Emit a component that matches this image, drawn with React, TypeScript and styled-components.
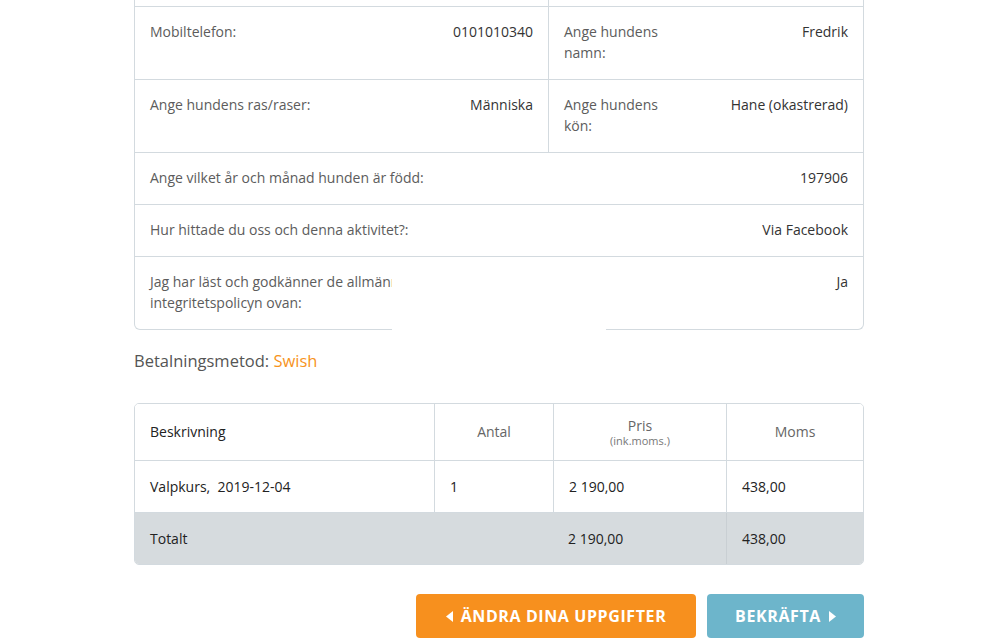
import React from "react";
import styled, { createGlobalStyle } from "styled-components";

const Global = createGlobalStyle`
  html, body { margin: 0; padding: 0; background: #fff; }
  body { font-family: "Open Sans", "Liberation Sans", sans-serif; color: #333; }
  * { box-sizing: border-box; }
`;

const BORDER = "#d3dadf";

const Page = styled.div`
  width: 730px;
  margin-left: calc(50% - 365.5px);
  padding-bottom: 20px;
`;

const Card = styled.div`
  position: relative;
  border: 1px solid ${BORDER};
  border-top: none;
  border-radius: 0 0 6px 6px;
`;

const Row = styled.div<{ $first?: boolean }>`
  display: flex;
  border-top: ${(p) => (p.$first ? "none" : `1px solid ${BORDER}`)};
  min-height: ${(p) => (p.$first ? "6px" : "auto")};
`;

const Cell = styled.div<{ $half?: "left" | "right"; $empty?: boolean }>`
  flex: ${(p) => (p.$half === "left" ? "0 0 414px" : "1 1 auto")};
  border-right: ${(p) => (p.$half === "left" ? `1px solid ${BORDER}` : "none")};
  display: flex;
  justify-content: space-between;
  align-items: flex-start;
  padding: ${(p) => (p.$empty ? "0" : "14px 15px 16px")};
  font-size: 14px;
  line-height: 21px;
`;

const Label = styled.div<{ $w?: number }>`
  color: #5c5c5c;
  ${(p) => (p.$w ? `width: ${p.$w}px;` : "")}
`;

const Value = styled.div`
  color: #333;
  text-align: right;
`;

const Patch = styled.div`
  position: absolute;
  left: 257px;
  top: 262px;
  width: 214px;
  height: 72px;
  background: #fff;
`;

const Payment = styled.div`
  margin-top: 20px;
  font-size: 16.5px;
  line-height: 22px;
  color: #555;
  span { color: #f7941d; }
`;

const Table = styled.div`
  margin-top: 31px;
  border: 1px solid ${BORDER};
  border-radius: 5px;
  overflow: hidden;
`;

const TRow = styled.div<{ $head?: boolean; $total?: boolean }>`
  display: grid;
  grid-template-columns: 299px 119px 173px 1fr;
  height: ${(p) => (p.$head ? "56px" : "52px")};
  border-top: ${(p) => (p.$head ? "none" : `1px solid ${BORDER}`)};
  background: ${(p) => (p.$total ? "#d6dbde" : "#fff")};
`;

const TCell = styled.div<{ $center?: boolean; $line?: "none" | "light" | "normal"; $span?: number; $muted?: boolean }>`
  grid-column: span ${(p) => p.$span ?? 1};
  display: flex;
  flex-direction: column;
  justify-content: center;
  align-items: ${(p) => (p.$center ? "center" : "flex-start")};
  padding: 0 15px;
  font-size: 14px;
  line-height: 18px;
  color: ${(p) => (p.$muted ? "#666" : "#222")};
  border-left: ${(p) =>
    p.$line === "light" ? "1px solid #c9cfd3" : p.$line === "normal" ? `1px solid ${BORDER}` : "none"};
`;

const Main = styled.span`
  display: block;
  line-height: 15px;
`;

const Sub = styled.span`
  display: block;
  margin-top: 1px;
  font-size: 11px;
  line-height: 13px;
  color: #777;
`;

const Actions = styled.div`
  display: flex;
  justify-content: flex-end;
  gap: 11px;
  margin-top: 29px;
`;

const Button = styled.button<{ $color: string; $w: number }>`
  width: ${(p) => p.$w}px;
  height: 44px;
  border: none;
  border-radius: 4px;
  background: ${(p) => p.$color};
  color: #fff;
  font-family: "Open Sans", "Liberation Sans", sans-serif;
  font-weight: 700;
  font-size: 16px;
  letter-spacing: 0.6px;
  display: flex;
  align-items: center;
  justify-content: center;
  gap: 8px;
  padding: 0;
`;

const Tri = ({ dir }: { dir: "left" | "right" }) => (
  <svg width="7" height="11" viewBox="0 0 7 11">
    {dir === "left" ? <path d="M7 0 L0 5.5 L7 11 Z" fill="#fff" /> : <path d="M0 0 L7 5.5 L0 11 Z" fill="#fff" />}
  </svg>
);

export default function App() {
  return (
    <Page>
      <Global />
      <Card>
        <Row $first>
          <Cell $half="left" $empty />
          <Cell $empty />
        </Row>
        <Row>
          <Cell $half="left">
            <Label>Mobiltelefon:</Label>
            <Value>0101010340</Value>
          </Cell>
          <Cell $half="right">
            <Label $w={110}>Ange hundens namn:</Label>
            <Value>Fredrik</Value>
          </Cell>
        </Row>
        <Row>
          <Cell $half="left">
            <Label>Ange hundens ras/raser:</Label>
            <Value>Människa</Value>
          </Cell>
          <Cell $half="right">
            <Label $w={110}>Ange hundens kön:</Label>
            <Value>Hane (okastrerad)</Value>
          </Cell>
        </Row>
        <Row>
          <Cell>
            <Label>Ange vilket år och månad hunden är född:</Label>
            <Value>197906</Value>
          </Cell>
        </Row>
        <Row>
          <Cell>
            <Label>Hur hittade du oss och denna aktivitet?:</Label>
            <Value>Via Facebook</Value>
          </Cell>
        </Row>
        <Row>
          <Cell>
            <Label $w={420}>Jag har läst och godkänner de allmänna villkoren och integritetspolicyn ovan:</Label>
            <Value>Ja</Value>
          </Cell>
        </Row>
        <Patch />
      </Card>

      <Payment>
        Betalningsmetod: <span>Swish</span>
      </Payment>

      <Table>
        <TRow $head>
          <TCell>Beskrivning</TCell>
          <TCell $center $muted $line="normal">Antal</TCell>
          <TCell $center $muted $line="normal">
            <Main>Pris</Main>
            <Sub>(ink.moms.)</Sub>
          </TCell>
          <TCell $center $muted $line="normal">Moms</TCell>
        </TRow>
        <TRow>
          <TCell>Valpkurs,&nbsp; 2019-12-04</TCell>
          <TCell $line="normal">1</TCell>
          <TCell $line="normal">2 190,00</TCell>
          <TCell $line="normal">438,00</TCell>
        </TRow>
        <TRow $total>
          <TCell $span={2}>Totalt</TCell>
          <TCell>2 190,00</TCell>
          <TCell $line="light">438,00</TCell>
        </TRow>
      </Table>

      <Actions>
        <Button $color="#f7901e" $w={280}>
          <Tri dir="left" />
          ÄNDRA DINA UPPGIFTER
        </Button>
        <Button $color="#6db5cb" $w={157}>
          BEKRÄFTA
          <Tri dir="right" />
        </Button>
      </Actions>
    </Page>
  );
}
